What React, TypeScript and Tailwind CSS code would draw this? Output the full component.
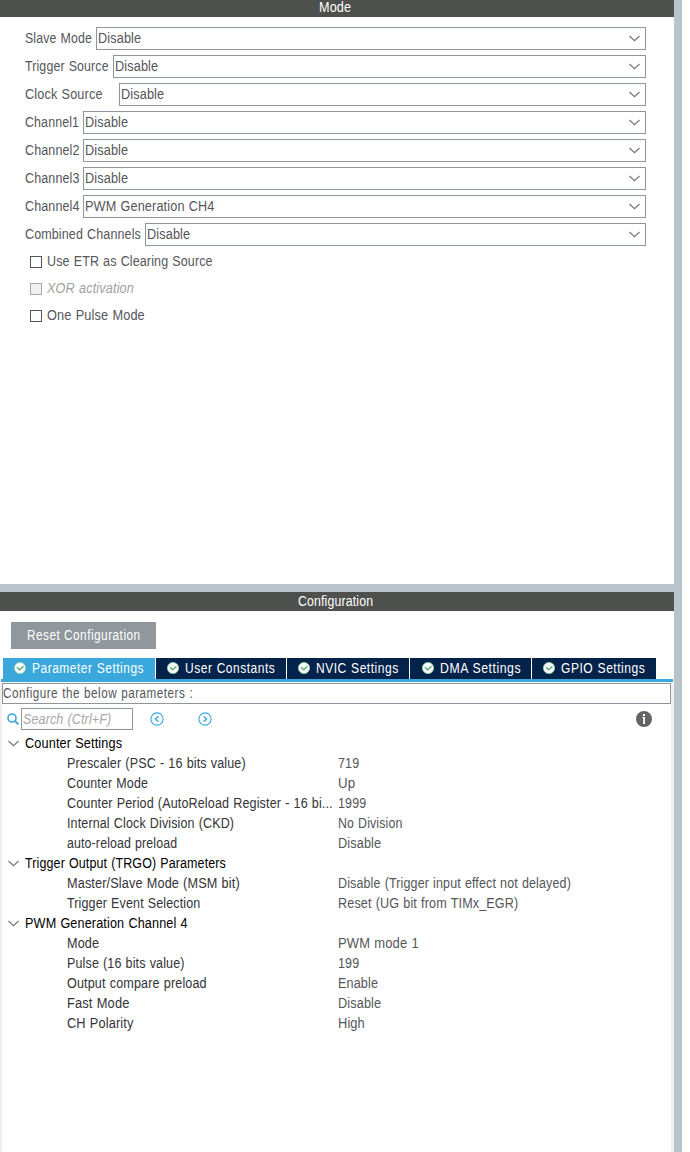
import React, { useLayoutEffect, useRef, useState } from "react";

/** One line of text, condensed or widened so that it fills `width` pixels. */
function Line({ text, width, className = "" }: { text: string; width: number; className?: string }) {
  const ref = useRef<HTMLSpanElement>(null);
  const [scale, setScale] = useState(1);
  useLayoutEffect(() => {
    if (ref.current) setScale(width / ref.current.offsetWidth);
  }, [width, text]);
  return (
    <span className={`inline-flex shrink-0 ${className}`} style={{ width }}>
      <span ref={ref} className="shrink-0 origin-left" style={{ transform: `scaleX(${scale})` }}>
        {text}
      </span>
    </span>
  );
}

const combos = [
  { label: "Slave Mode", size: 67, value: "Disable", valueSize: 43.5, column: "w-[71px]" },
  { label: "Trigger Source", size: 84, value: "Disable", valueSize: 43.5, column: "w-[88px]" },
  { label: "Clock Source", size: 78, value: "Disable", valueSize: 43.5, column: "w-[94px]" },
  { label: "Channel1", size: 54, value: "Disable", valueSize: 43.5, column: "w-[58px]" },
  { label: "Channel2", size: 54.5, value: "Disable", valueSize: 43.5, column: "w-[58px]" },
  { label: "Channel3", size: 54.5, value: "Disable", valueSize: 43.5, column: "w-[58px]" },
  { label: "Channel4", size: 54.5, value: "PWM Generation CH4", valueSize: 129.5, column: "w-[58px]" },
  { label: "Combined Channels", size: 116, value: "Disable", valueSize: 43.5, column: "w-[120px]" },
];

const checks = [
  { label: "Use ETR as Clearing Source", size: 166, disabled: false },
  { label: "XOR activation", size: 87, disabled: true },
  { label: "One Pulse Mode", size: 97.5, disabled: false },
];

const tabs = [
  { label: "Parameter Settings", size: 112, box: "w-[152px] pl-[11px]", active: true },
  { label: "User Constants", size: 90, box: "w-[130px] pl-[11px]", active: false },
  { label: "NVIC Settings", size: 82.5, box: "w-[122px] pl-[11px]", active: false },
  { label: "DMA Settings", size: 81.5, box: "w-[121px] pl-[12px]", active: false },
  { label: "GPIO Settings", size: 84.5, box: "w-[124px] pl-[11px]", active: false },
];

type Row = [name: string, nameSize: number, value: string, valueSize: number];

const groups: { title: string; size: number; rows: Row[] }[] = [
  {
    title: "Counter Settings",
    size: 97,
    rows: [
      ["Prescaler (PSC - 16 bits value)", 178.5, "719", 21.5],
      ["Counter Mode", 81, "Up", 17],
      ["Counter Period (AutoReload Register - 16 bi...", 265.5, "1999", 28.5],
      ["Internal Clock Division (CKD)", 167, "No Division", 64.5],
      ["auto-reload preload", 110.5, "Disable", 43.5],
    ],
  },
  {
    title: "Trigger Output (TRGO) Parameters",
    size: 201,
    rows: [
      ["Master/Slave Mode (MSM bit)", 173, "Disable (Trigger input effect not delayed)", 233],
      ["Trigger Event Selection", 133, "Reset (UG bit from TIMx_EGR)", 180],
    ],
  },
  {
    title: "PWM Generation Channel 4",
    size: 162.5,
    rows: [
      ["Mode", 32.5, "PWM mode 1", 80.5],
      ["Pulse (16 bits value)", 118, "199", 21.5],
      ["Output compare preload", 139.5, "Enable", 40.5],
      ["Fast Mode", 62.5, "Disable", 43.5],
      ["CH Polarity", 66.5, "High", 26.5],
    ],
  },
];

function Chevron() {
  return (
    <svg width="11" height="7" viewBox="0 0 11 7" fill="none" className="shrink-0">
      <path d="M0.5 1L5.5 5.6L10.5 1" stroke="#74787b" strokeWidth="1.2" />
    </svg>
  );
}

function CheckBadge() {
  return (
    <svg width="12" height="12" viewBox="0 0 12 12" fill="none" className="shrink-0">
      <circle cx="6" cy="6" r="5.6" fill="#fff" stroke="#8fd2a5" strokeWidth="0.8" />
      <path d="M3 5.2L5.7 7.8L9.4 4.3" stroke="#55b075" strokeWidth="1.4" />
    </svg>
  );
}

function NavArrow({ dir }: { dir: "left" | "right" }) {
  return (
    <svg width="14" height="14" viewBox="0 0 14 14" fill="none" stroke="#3aa8dc" className="shrink-0">
      <circle cx="7" cy="7" r="6.1" strokeWidth="1.1" />
      <path d={dir === "left" ? "M8.3 4.3L5.5 7L8.3 9.7" : "M5.7 4.3L8.5 7L5.7 9.7"} strokeWidth="1.4" />
    </svg>
  );
}

export default function App() {
  return (
    <div className="flex h-[1152px] w-[690px] overflow-hidden bg-white font-['Liberation_Sans',Arial,sans-serif] text-[14px] leading-[20px] tracking-[0.15px] whitespace-nowrap text-[#55565a] [word-spacing:0.5px]">
      <div className="flex w-[674px] shrink-0 flex-col">
        <section className="flex h-[584px] shrink-0 flex-col">
          <h2 className="flex h-[17px] justify-center bg-[#4e504e] pr-1 leading-[15px] text-white">
            <Line text="Mode" width={32.5} />
          </h2>
          <div className="flex flex-col gap-[5px] pt-[10px] pr-[28px] pl-[25px]">
            {combos.map((c) => (
              <div key={c.label} className="flex h-[23px] items-center">
                <div className={`flex shrink-0 pb-[2px] ${c.column}`}>
                  <Line text={c.label} width={c.size} />
                </div>
                <div className="flex h-full flex-1 items-center justify-between border border-[#8f979d] pr-[5px] pl-px">
                  <Line text={c.value} width={c.valueSize} className="pb-[2px]" />
                  <Chevron />
                </div>
              </div>
            ))}
          </div>
          <div className="mt-[5px] flex flex-col gap-[7px] pl-[30px]">
            {checks.map((c) => (
              <div key={c.label} className="flex h-[20px] items-center gap-[5px]">
                <span
                  className={`mt-[2px] size-[12px] border ${
                    c.disabled ? "border-[#a3abb1] bg-[#eff1f3]" : "border-[#55565a] bg-white"
                  }`}
                />
                <Line text={c.label} width={c.size} className={c.disabled ? "text-[#a2a2a2] italic" : ""} />
              </div>
            ))}
          </div>
        </section>

        <div className="h-2 shrink-0 bg-[#b8c3ca]" />

        <section className="flex flex-1 flex-col">
          <h2 className="flex h-[19px] shrink-0 justify-center bg-[#4e504e] pr-[3px] leading-[19px] text-white">
            <Line text="Configuration" width={75} />
          </h2>
          <div className="h-[47px] shrink-0 pt-[11px] pl-[11px]">
            <button className="flex h-[27px] w-[145px] items-center bg-[#90979d] pb-px pl-4 tracking-[0.6px] text-white">
              <Line text="Reset Configuration" width={113.5} />
            </button>
          </div>
          <div className="flex h-[21px] shrink-0 gap-px pl-[3px]">
            {tabs.map((t) => (
              <div
                key={t.label}
                className={`flex items-center gap-[6px] pb-px tracking-[0.6px] text-white ${t.box} ${
                  t.active ? "bg-[#3aa8dc]" : "bg-[#04234b]"
                }`}
              >
                <CheckBadge />
                <Line text={t.label} width={t.size} />
              </div>
            ))}
          </div>
          <div className="mr-px ml-px h-[3px] shrink-0 bg-[#3aa8dc]" />
          <div className="flex flex-1 flex-col border-r-3 border-l-2 border-[#f0f0f0] pt-px">
            <div className="flex h-[21px] shrink-0 items-center border border-[#8f979d] pb-px tracking-[0.6px]">
              <Line text="Configure the below parameters :" width={190} />
            </div>
            <div className="flex h-[29px] shrink-0 items-center pl-[5px]">
              <svg width="12" height="12" viewBox="0 0 12 12" fill="none" stroke="#3aa8dc" className="shrink-0">
                <circle cx="5" cy="5" r="4" strokeWidth="1.6" />
                <path d="M7.9 7.9L11.4 11.4" strokeWidth="1.9" />
              </svg>
              <div className="ml-[2px] flex h-[22px] w-[112px] items-center border border-[#8f979d] pl-px text-[#a8a8a8] italic">
                <Line text="Search (Ctrl+F)" width={88.5} />
              </div>
              <div className="ml-[17px] flex gap-[34px]">
                <NavArrow dir="left" />
                <NavArrow dir="right" />
              </div>
              <svg width="16" height="16" viewBox="0 0 16 16" className="mr-[19px] ml-auto">
                <circle cx="8" cy="8" r="8" fill="#636466" />
                <path d="M7 3h2v2H7zM6.5 6h2.5v7H7.2V7H6.5z" fill="#fff" />
              </svg>
            </div>
            <div className="flex flex-col">
              {groups.map((g) => (
                <div key={g.title} className="flex flex-col">
                  <div className="flex h-5 items-center gap-[6px] pl-[6px] text-black">
                    <Chevron />
                    <Line text={g.title} width={g.size} />
                  </div>
                  {g.rows.map(([name, nameSize, value, valueSize]) => (
                    <div key={name} className="flex h-5 items-center pl-[65px]">
                      <div className="flex w-[271px] shrink-0 text-[#343438]">
                        <Line text={name} width={nameSize} />
                      </div>
                      <Line text={value} width={valueSize} />
                    </div>
                  ))}
                </div>
              ))}
            </div>
          </div>
        </section>
      </div>
      <div className="w-2 shrink-0 bg-[#b8c3ca]" />
    </div>
  );
}
